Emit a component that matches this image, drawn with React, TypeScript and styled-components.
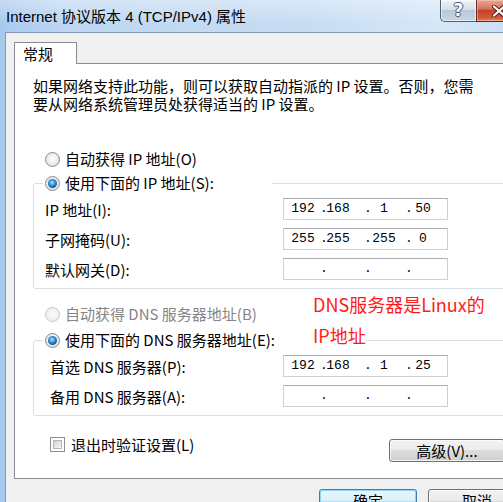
import React from 'react';
import styled, { createGlobalStyle, css } from 'styled-components';

const UI_FONT = `"Noto Sans CJK SC", "Noto Sans", sans-serif`;

const GlobalStyle = createGlobalStyle`
  html, body {
    margin: 0;
    padding: 0;
    overflow: hidden;
    background: #c3daf3;
  }
  #root {
    width: 503px;
    height: 502px;
    overflow: hidden;
  }
`;

const Window = styled.div`
  width: 540px;
  height: 540px;
  display: flex;
  flex-direction: column;
  background: linear-gradient(90deg, #a8c9ef 0%, #bed7f2 12%, #c6dcf3 55%, #d6e7f8 82%, #c4daf2 100%);
`;

const TitleBar = styled.div`
  height: 32px;
  flex-shrink: 0;
  display: flex;
  align-items: flex-start;
  background: linear-gradient(180deg, rgba(255, 255, 255, 0.35) 0%, rgba(255, 255, 255, 0) 75%);
`;

const Title = styled.div`
  flex: 1;
  padding: 7px 0 0 6px;
  font: 15px/20px "Liberation Sans", "Noto Sans CJK SC", sans-serif;
  color: #000;
  white-space: nowrap;
`;

const CaptionButtons = styled.div`
  display: flex;
  margin-right: 19px;
`;

const CaptionButton = styled.div<{ $kind: 'help' | 'close' }>`
  height: 22px;
  box-sizing: border-box;
  display: flex;
  align-items: center;
  justify-content: center;
  border: 1px solid #4f5f74;
  border-top: none;
  ${p =>
    p.$kind === 'help'
      ? css`
          width: 36px;
          border-right: none;
          border-bottom-left-radius: 5px;
          background: linear-gradient(180deg, #eef3f8 0%, #d6e0ea 45%, #b9c9da 50%, #c8d6e4 100%);
          box-shadow: inset 0 0 0 1px rgba(255, 255, 255, 0.6);
        `
      : css`
          width: 45px;
          border-bottom-right-radius: 5px;
          border-color: #5c2a22;
          background: linear-gradient(180deg, #e9a795 0%, #d8735d 42%, #c5422a 50%, #d0593b 85%, #e08a63 100%);
          box-shadow: inset 0 0 0 1px rgba(255, 220, 200, 0.45);
        `}
`;

const HelpGlyph = styled.span`
  font: bold 17px/1 "DejaVu Sans", sans-serif;
  color: #fff;
  text-shadow: 1px 0 0 #4b5868, -1px 0 0 #4b5868, 0 1px 0 #4b5868, 0 -1px 0 #4b5868;
`;

const Client = styled.div`
  flex: 1;
  margin-left: 5px;
  border-top: 1px solid #8697ad;
  border-left: 1px solid #8697ad;
  background: #f0f0f0;
  padding: 9px 14px 0 8px;
  font: 15px ${UI_FONT};
  color: #000;
`;

const TabStrip = styled.div`
  display: flex;
  height: 21px;
`;

const Tab = styled.div`
  position: relative;
  z-index: 1;
  width: 63px;
  height: 22px;
  box-sizing: border-box;
  border: 1px solid #898c95;
  border-bottom: none;
  background: #fff;
  padding-left: 8px;
  line-height: 21px;
`;

const TabPanel = styled.div`
  position: relative;
  border: 1px solid #898c95;
  background: #fff;
  padding: 13px 0 16px 18px;
`;

const Description = styled.p`
  margin: 0;
  line-height: 18px;
  white-space: nowrap;
`;

const OptionRow = styled.label<{ $top?: number; $disabled?: boolean }>`
  display: flex;
  align-items: center;
  gap: 5px;
  height: 18px;
  line-height: 18px;
  margin: ${p => p.$top ?? 0}px 0 0 12px;
  color: ${p => (p.$disabled ? '#858585' : '#000')};
  white-space: nowrap;
`;

const RadioMark = styled.span<{ $checked?: boolean; $disabled?: boolean }>`
  position: relative;
  flex-shrink: 0;
  width: 15px;
  height: 15px;
  box-sizing: border-box;
  border-radius: 50%;
  border: 1px solid ${p => (p.$disabled ? '#c4c6c8' : '#8a8c8e')};
  background: ${p =>
    p.$disabled
      ? 'radial-gradient(circle at 50% 45%, #fbfbfb 0%, #f1f1f1 55%, #e6e6e6 100%)'
      : 'radial-gradient(circle at 50% 45%, #ffffff 0%, #f0f0f0 45%, #d2d2d2 100%)'};
  ${p =>
    p.$checked &&
    css`
      &::after {
        content: '';
        position: absolute;
        left: 2px;
        top: 2px;
        width: 9px;
        height: 9px;
        border-radius: 50%;
        background: radial-gradient(circle at 45% 40%, #b8e6ff 0%, #3d9be0 35%, #125490 70%, #0b2f55 100%);
      }
    `}
`;

const GroupBox = styled.fieldset<{ $top: number }>`
  margin: ${p => p.$top}px 11px 0 0;
  padding: 6px 0 8px 0;
  border: 1px solid #d5dfe5;
  border-radius: 3px;
  min-width: 0;
`;

const GroupLegend = styled.legend<{ $width: number }>`
  margin-left: 9px;
  padding: 0 0 0 2px;
  width: ${p => p.$width}px;
  box-sizing: border-box;

  & > label {
    margin: 0;
  }
`;

const Fields = styled.div<{ $indent: number }>`
  padding-left: ${p => p.$indent}px;
  display: flex;
  flex-direction: column;
  gap: 8px;
`;

const FieldRow = styled.div<{ $labelWidth: number }>`
  display: grid;
  grid-template-columns: ${p => p.$labelWidth}px 165px;
  align-items: center;
  height: 22px;
  white-space: nowrap;
`;

const AddressBox = styled.div`
  width: 165px;
  height: 22px;
  box-sizing: border-box;
  display: flex;
  align-items: center;
  border: 1px solid #cdd1d6;
  border-top-color: #abadb3;
  background: #fff;
  font: 13px/20px "Liberation Mono", monospace;
  color: #000;
`;

const Segment = styled.span<{ $w: number }>`
  display: flex;
  flex-shrink: 0;
  width: ${p => p.$w}px;
`;

/* the separator dot only takes 4px; its glyph is pulled back to sit centred */
const Dot = styled.span`
  display: block;
  flex-shrink: 0;
  width: 4px;
  letter-spacing: -3.8px;
  text-indent: -2px;
`;

const Octet = styled.span<{ $offset: number }>`
  width: 24px;
  margin-left: ${p => p.$offset}px;
  text-align: center;
`;

const FooterRow = styled.div`
  display: flex;
  justify-content: space-between;
  align-items: flex-start;
  margin-top: 21px;
`;

const CheckRow = styled.label`
  display: flex;
  align-items: center;
  gap: 6px;
  height: 15px;
  line-height: 15px;
  margin-left: 17px;
`;

const CheckMark = styled.span`
  position: relative;
  width: 15px;
  height: 15px;
  box-sizing: border-box;
  border: 1px solid #8e8f8f;
  background: #fff;

  &::after {
    content: '';
    position: absolute;
    inset: 2px;
    border: 1px solid #b3b7bc;
    background: linear-gradient(135deg, #cfd3d8 0%, #e6e8eb 55%, #fbfbfb 100%);
  }
`;

const PushButton = styled.button<{ $width: number; $isDefault?: boolean }>`
  flex-shrink: 0;
  width: ${p => p.$width}px;
  height: 23px;
  box-sizing: border-box;
  padding: 0;
  border-radius: 3px;
  font: 15px/21px ${UI_FONT};
  color: #000;
  border: 1px solid ${p => (p.$isDefault ? '#3c7fb1' : '#707070')};
  background: ${p =>
    p.$isDefault
      ? 'linear-gradient(180deg, #eaf6fd 0%, #d9f0fc 50%, #bee6fd 50%, #a7d9f5 100%)'
      : 'linear-gradient(180deg, #f2f2f2 0%, #ebebeb 50%, #dddddd 50%, #cfcfcf 100%)'};
  box-shadow: inset 0 0 0 1px ${p => (p.$isDefault ? '#8fd7f7' : 'rgba(255, 255, 255, 0.75)')};
`;

const AdvancedButton = styled(PushButton)`
  margin: 2px 20px 0 0;
`;

const ButtonBar = styled.div`
  display: flex;
  justify-content: flex-end;
  gap: 11px;
  margin-top: 10px;
`;

const Annotation = styled.div`
  position: absolute;
  left: 298px;
  top: 225px;
  font: 18px/31px ${UI_FONT};
  color: #ff1a1a;
  white-space: nowrap;

  span {
    background: #fff;
  }
`;

// widths of the four octet cells and where each number starts after its dot
const SEGMENTS = [
  { w: 38, offset: 7 },
  { w: 44, offset: 0 },
  { w: 41, offset: 2 },
  { w: 40, offset: 0 },
];

const AddressField: React.FC<{ value?: string[] }> = ({ value = ['', '', '', ''] }) => (
  <AddressBox>
    {SEGMENTS.map((seg, i) => (
      <Segment key={i} $w={seg.w}>
        {i > 0 && <Dot>.</Dot>}
        <Octet $offset={seg.offset}>{value[i]}</Octet>
      </Segment>
    ))}
  </AddressBox>
);

interface RadioProps {
  label: string;
  checked?: boolean;
  disabled?: boolean;
  top?: number;
}

const Radio: React.FC<RadioProps> = ({ label, checked, disabled, top }) => (
  <OptionRow $top={top} $disabled={disabled}>
    <RadioMark $checked={checked} $disabled={disabled} />
    {label}
  </OptionRow>
);

const CloseGlyph = () => (
  <svg width="14" height="12" viewBox="0 0 14 12">
    <path d="M2 1.5 L12 10.5 M12 1.5 L2 10.5" stroke="#4a1c14" strokeWidth="4" strokeLinecap="round" />
    <path d="M2 1.5 L12 10.5 M12 1.5 L2 10.5" stroke="#fff" strokeWidth="2.2" strokeLinecap="round" />
  </svg>
);

export default function App() {
  return (
    <>
      <GlobalStyle />
      <Window>
        <TitleBar>
          <Title>Internet 协议版本 4 (TCP/IPv4) 属性</Title>
          <CaptionButtons>
            <CaptionButton $kind="help">
              <HelpGlyph>?</HelpGlyph>
            </CaptionButton>
            <CaptionButton $kind="close">
              <CloseGlyph />
            </CaptionButton>
          </CaptionButtons>
        </TitleBar>

        <Client>
          <TabStrip>
            <Tab>常规</Tab>
          </TabStrip>
          <TabPanel>
            <Description>
              如果网络支持此功能，则可以获取自动指派的 IP 设置。否则，您需
              <br />
              要从网络系统管理员处获得适当的 IP 设置。
            </Description>

            <Radio label="自动获得 IP 地址(O)" top={37} />
            <GroupBox $top={6}>
              <GroupLegend $width={229}>
                <Radio label="使用下面的 IP 地址(S):" checked />
              </GroupLegend>
              <Fields $indent={11}>
                <FieldRow $labelWidth={238}>
                  IP 地址(I):
                  <AddressField value={['192', '168', '1', '50']} />
                </FieldRow>
                <FieldRow $labelWidth={238}>
                  子网掩码(U):
                  <AddressField value={['255', '255', '255', '0']} />
                </FieldRow>
                <FieldRow $labelWidth={238}>
                  默认网关(D):
                  <AddressField />
                </FieldRow>
              </Fields>
            </GroupBox>

            <Radio label="自动获得 DNS 服务器地址(B)" disabled top={16} />
            <GroupBox $top={8}>
              <GroupLegend $width={270}>
                <Radio label="使用下面的 DNS 服务器地址(E):" checked />
              </GroupLegend>
              <Fields $indent={16}>
                <FieldRow $labelWidth={233}>
                  首选 DNS 服务器(P):
                  <AddressField value={['192', '168', '1', '25']} />
                </FieldRow>
                <FieldRow $labelWidth={233}>
                  备用 DNS 服务器(A):
                  <AddressField />
                </FieldRow>
              </Fields>
            </GroupBox>

            <FooterRow>
              <CheckRow>
                <CheckMark />
                退出时验证设置(L)
              </CheckRow>
              <AdvancedButton $width={116}>高级(V)...</AdvancedButton>
            </FooterRow>

            <Annotation>
              <span>DNS服务器是Linux的</span>
              <br />
              <span>IP地址</span>
            </Annotation>
          </TabPanel>

          <ButtonBar>
            <PushButton $width={98} $isDefault>
              确定
            </PushButton>
            <PushButton $width={98}>取消</PushButton>
          </ButtonBar>
        </Client>
      </Window>
    </>
  );
}
